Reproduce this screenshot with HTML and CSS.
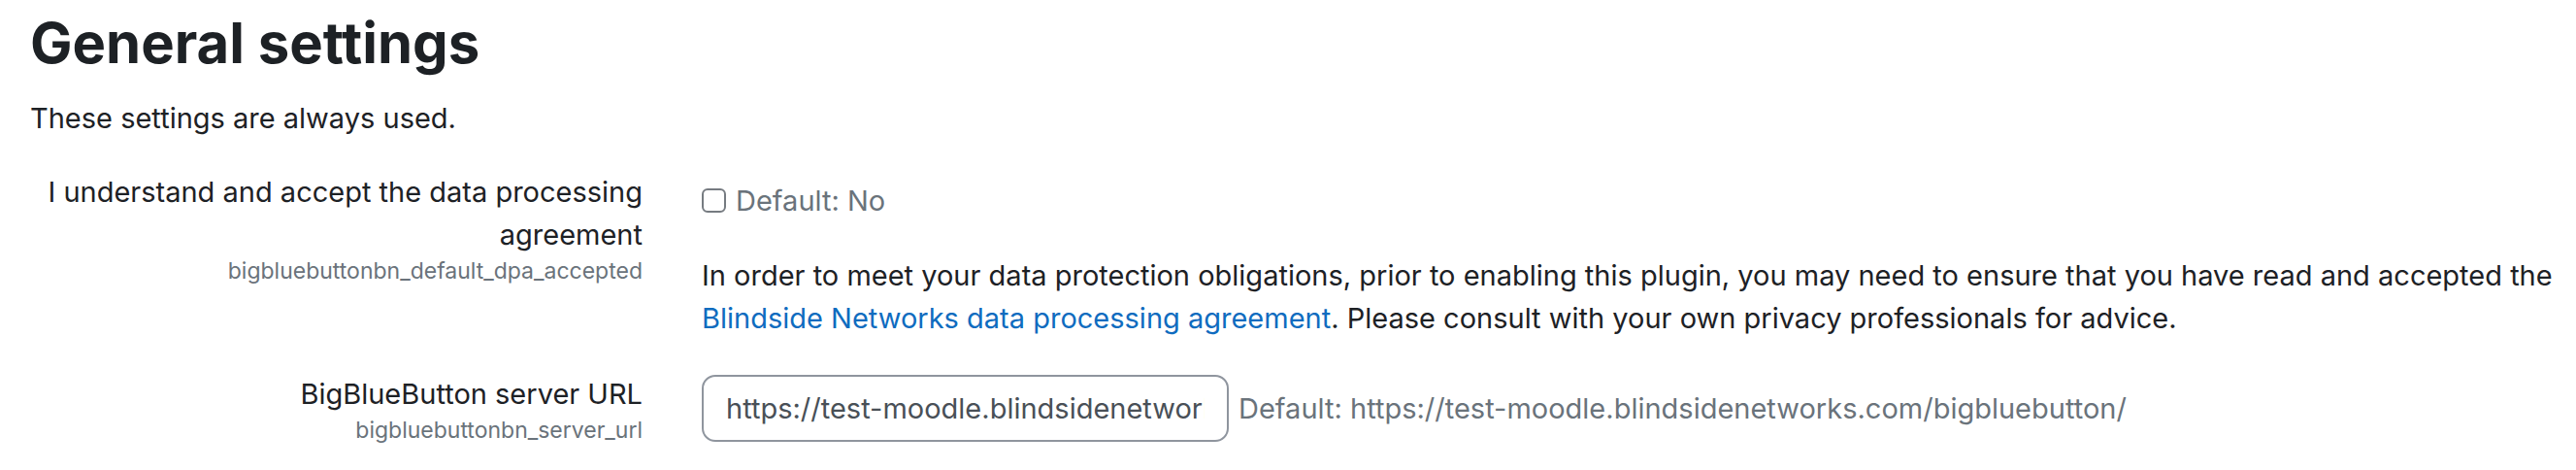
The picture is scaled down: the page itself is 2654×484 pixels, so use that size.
FILE: index.html
```html
<!DOCTYPE html>
<html lang="en">
<head>
    <meta charset="UTF-8">
    <meta name="viewport" content="width=device-width, initial-scale=1.0">
    <title>General settings</title>
    <link rel="stylesheet" href="styles.css">
</head>
<body>
    <div class="page">
        <h2 class="section-title">General settings</h2>
        <p class="section-info">These settings are always used.</p>

        <div class="settings">
            <div class="form-item">
                <div class="form-label">
                    <label for="id_dpa">I understand and accept the data processing agreement</label>
                    <span class="form-shortname">bigbluebuttonbn_default_dpa_accepted</span>
                </div>
                <div class="form-setting">
                    <div class="form-checkbox">
                        <input type="checkbox" id="id_dpa" class="check">
                        <span class="form-defaultinfo">Default: No</span>
                    </div>
                    <div class="form-description">
                        In order to meet your data protection obligations, prior to enabling this plugin, you may need to ensure that you have read and accepted the
                        <a href="#">Blindside Networks data processing agreement</a>. Please consult with your own privacy professionals for advice.
                    </div>
                </div>
            </div>

            <div class="form-item">
                <div class="form-label">
                    <label for="id_server_url">BigBlueButton server URL</label>
                    <span class="form-shortname">bigbluebuttonbn_server_url</span>
                </div>
                <div class="form-setting">
                    <div class="form-text">
                        <input type="text" id="id_server_url" class="form-control" value="https://test-moodle.blindsidenetworks.com/bigbluebutton/">
                        <span class="form-defaultinfo">Default: https://test-moodle.blindsidenetworks.com/bigbluebutton/</span>
                    </div>
                </div>
            </div>
        </div>
    </div>
</body>
</html>
```

FILE: styles.css
```css
body {
    margin: 0;
    background-color: #fff;
    color: #1d2125;
    font-family: Inter, Roboto, "Liberation Sans", sans-serif;
    font-size: 29px;
    line-height: 44px;
}

.page {
    padding: 9px 24px 0 31px;
}

.section-title {
    margin: 0 0 21px;
    font-size: 58px;
    font-weight: 700;
    line-height: 70px;
}

.section-info {
    margin: 0 0 32px;
}

.settings {
    display: flex;
    flex-direction: column;
    gap: 34px;
}

.form-item {
    display: grid;
    grid-template-columns: 631px 1fr;
    column-gap: 61px;
}

.form-label {
    text-align: right;
}

.form-label label {
    display: block;
}

.form-shortname {
    display: block;
    color: #6a737b;
    font-size: 23px;
    line-height: 30px;
}

.form-setting {
    padding-top: 9px;
}

.form-checkbox {
    display: flex;
    align-items: center;
    gap: 10px;
}

.check {
    appearance: none;
    margin: 0 0 2px;
    width: 25px;
    height: 25px;
    border: 2px solid #767b81;
    border-radius: 6px;
    background-color: #fff;
}

.form-defaultinfo {
    color: #6a737b;
}

.form-description {
    margin-top: 33px;
}

.form-description a {
    color: #0f6cbf;
    text-decoration: none;
}

.form-text {
    display: flex;
    align-items: center;
    gap: 10px;
    margin-top: -7px;
}

.form-control {
    box-sizing: border-box;
    width: 543px;
    height: 69px;
    padding: 0 23px;
    border: 2px solid #8f959e;
    border-radius: 14px;
    color: #495057;
    font-family: inherit;
    font-size: 29px;
    outline: none;
}
```
